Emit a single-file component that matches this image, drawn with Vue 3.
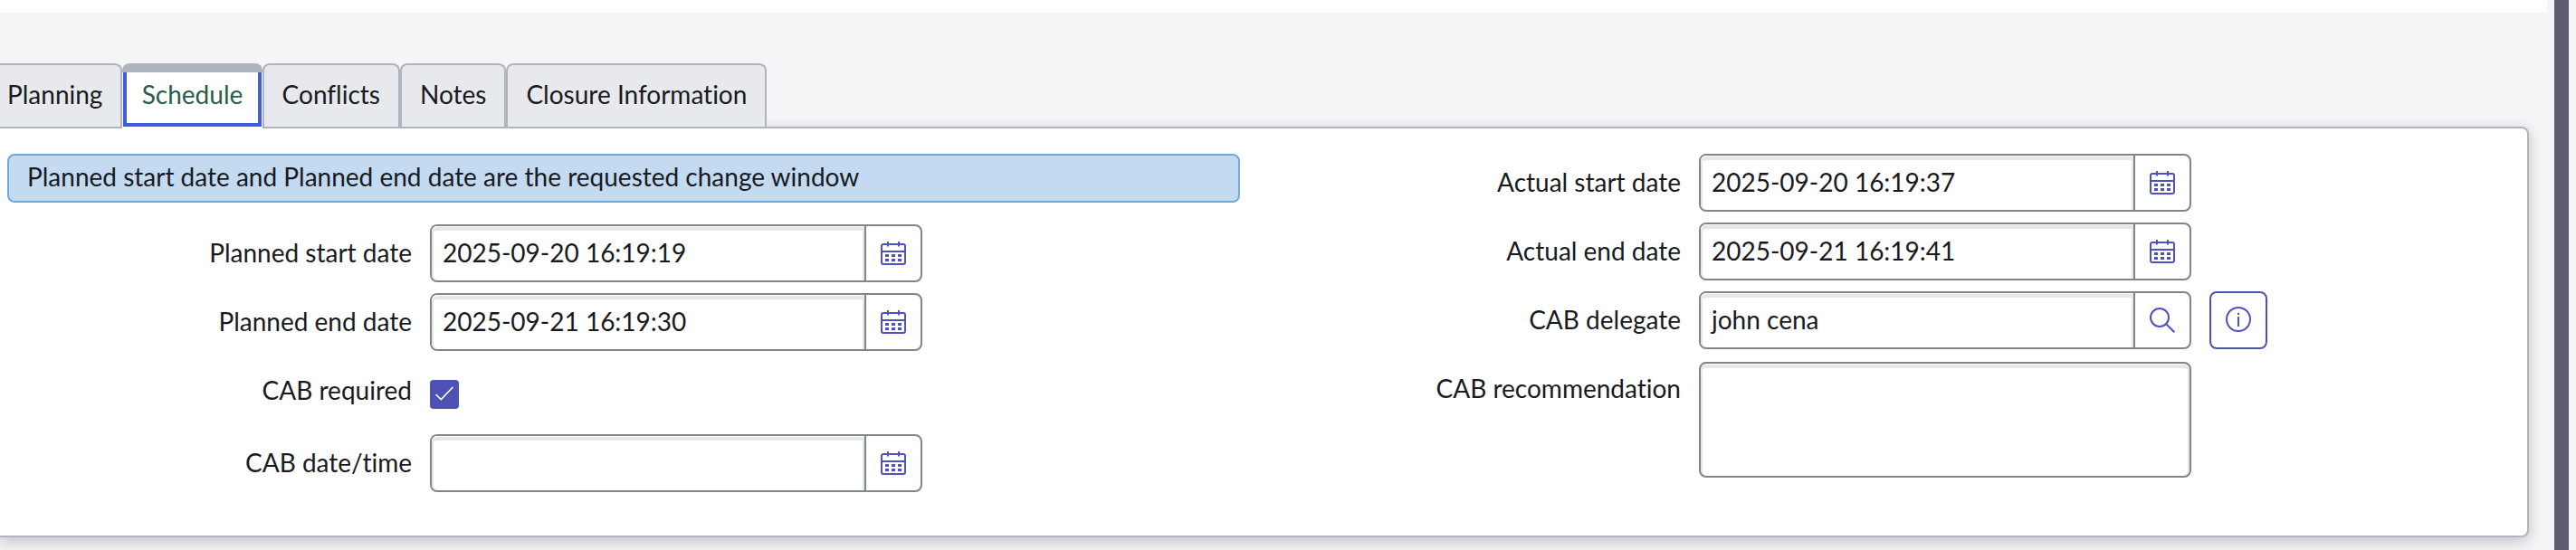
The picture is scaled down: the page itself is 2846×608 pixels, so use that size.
<script setup>
import { h } from 'vue'

const tabs = ['Planning', 'Schedule', 'Conflicts', 'Notes', 'Closure Information']
const active = 'Schedule'

const CalendarIcon = () =>
  h('svg', { width: 28, height: 28, viewBox: '0 0 28 28', fill: 'none', stroke: '#4f52bd', 'stroke-width': 2 }, [
    h('rect', { x: 1, y: 4, width: 26, height: 22, rx: 2 }),
    h('path', { d: 'M1 12H27M8 1V6.5M20 1V6.5' }),
    h('path', { d: 'M5 16.5H9M12 16.5H16M19 16.5H23M5 21.5H9M12 21.5H16M19 21.5H23', 'stroke-width': 3 }),
  ])
const SearchIcon = () =>
  h('svg', { width: 28, height: 28, viewBox: '0 0 28 28', fill: 'none', stroke: '#4f52bd', 'stroke-width': 2 }, [
    h('circle', { cx: 11, cy: 11, r: 10 }),
    h('path', { d: 'M18 18L27.3 27.3' }),
  ])

const left = [
  { label: 'Planned start date', value: '2025-09-20 16:19:19', icon: CalendarIcon },
  { label: 'Planned end date', value: '2025-09-21 16:19:30', icon: CalendarIcon },
  { label: 'CAB required', kind: 'check' },
  { label: 'CAB date/time', value: '', icon: CalendarIcon },
]
const right = [
  { label: 'Actual start date', value: '2025-09-20 16:19:37', icon: CalendarIcon },
  { label: 'Actual end date', value: '2025-09-21 16:19:41', icon: CalendarIcon },
  { label: 'CAB delegate', value: 'john cena', icon: SearchIcon, info: true },
  { label: 'CAB recommendation', kind: 'area' },
]
const columns = [
  { name: 'left', rows: left, banner: 'Planned start date and Planned end date are the requested change window' },
  { name: 'right', rows: right },
]
</script>

<template>
  <div class="page">
    <div class="main">
      <div class="top-strip"></div>
      <nav class="tabs">
        <div v-for="t in tabs" :key="t" class="tab" :class="{ active: t === active }">
          <span class="tab-text">{{ t }}</span>
        </div>
      </nav>
      <section class="panel">
        <div v-for="c in columns" :key="c.name" class="column" :class="c.name">
          <div v-if="c.banner" class="banner">{{ c.banner }}</div>
          <div v-for="r in c.rows" :key="r.label" class="row" :class="r.kind">
            <label class="label">{{ r.label }}</label>
            <span v-if="r.kind === 'check'" class="checkbox">
              <svg width="22" height="18" viewBox="0 0 22 18" fill="none" stroke="#fff" stroke-width="1.6">
                <path d="M1.5 10L7.3 15.5L20.5 1.8" />
              </svg>
            </span>
            <div v-else-if="r.kind === 'area'" class="textarea"></div>
            <template v-else>
              <div class="group">
                <div class="value">{{ r.value }}</div>
                <div class="addon"><component :is="r.icon" /></div>
              </div>
              <div v-if="r.info" class="info">
                <svg width="28" height="28" viewBox="0 0 28 28" fill="none" stroke="#4f52bd" stroke-width="2">
                  <circle cx="14" cy="14" r="13" />
                  <path d="M14 6.7V9M14 11V22" />
                </svg>
              </div>
            </template>
          </div>
        </div>
      </section>
    </div>
    <div class="gutter"></div>
  </div>
</template>

<style>
body {
  margin: 0;
}
</style>

<style scoped>
.page {
  display: flex;
  width: 2846px;
  height: 608px;
  overflow: hidden;
  background: #f5f5f8;
  font-family: Lato, "Open Sans", sans-serif;
  font-size: 28px;
  font-variant-ligatures: none;
  line-height: 40px;
  color: #181a23;
}
.page * {
  box-sizing: border-box;
}
.main {
  width: 2822px;
  height: 608px;
}
.gutter {
  width: 16px;
  background: #5d5c6c;
}
.top-strip {
  width: 2814px;
  height: 14px;
  background: #fff;
}
.tabs {
  display: flex;
  height: 70px;
  margin-top: 56px;
  margin-left: -14px;
}
.tab {
  height: 70px;
  padding: 12px 20px 0;
  border: 2px solid #b0b4be;
  border-bottom: 0;
  border-radius: 8px 8px 0 0;
  background: #e8e9ed;
  white-space: nowrap;
}
.tab.active {
  position: relative;
  height: 72px;
  padding: 4px 21.3px 0;
  border: 0;
  border-top: 10px solid #b0b4be;
  background: #fff;
  color: #285e49;
}
.tab.active::after {
  content: "";
  position: absolute;
  inset: 0 1px 2px;
  border: 4px solid #415ce0;
  border-top: 0;
}
.panel {
  display: flex;
  width: 2796px;
  height: 454px;
  margin-left: -2px;
  padding-top: 28px;
  border: 2px solid #b0b4be;
  border-radius: 0 8px 8px 0;
  background: #fff;
  box-shadow: 0 4px 16px rgba(0, 0, 0, 0.22);
}
.column {
  display: flex;
  flex-direction: column;
  gap: 12px;
}
.column.left {
  width: 1402px;
}
.banner {
  width: 1362px;
  height: 54px;
  margin: 0 0 12px 8px;
  padding: 3px 20px;
  border: 2px solid #6ea8dc;
  border-radius: 8px;
  background: #c3daf1;
}
.row {
  display: flex;
  height: 64px;
}
.label {
  width: 455px;
  margin-right: 20px;
  padding-top: 11px;
  text-align: right;
  white-space: nowrap;
}
.row.check {
  height: 68px;
}
.checkbox {
  display: flex;
  align-items: center;
  justify-content: center;
  width: 32px;
  height: 32px;
  margin-top: 20px;
  padding-bottom: 2px;
  border-radius: 4px;
  background: #4f52b5;
}
.group {
  display: flex;
  width: 544px;
  border: 2px solid #80848f;
  border-radius: 8px;
}
.value,
.textarea {
  box-shadow: inset 0 1px #fff, inset 0 5px #e6e8e8, inset 2px 0 #e6e8e8, inset -2px 0 #e6e8e8;
}
.value {
  width: 478px;
  padding: 9px 12px;
  border-radius: 6px 0 0 6px;
}
.addon {
  display: flex;
  flex: 1;
  align-items: center;
  justify-content: center;
  border-left: 2px solid #80848f;
}
.textarea {
  width: 544px;
  height: 128px;
  margin-top: 2px;
  border: 2px solid #80848f;
  border-radius: 8px;
}
.info {
  display: flex;
  align-items: center;
  justify-content: center;
  width: 64px;
  height: 64px;
  margin-left: 20px;
  padding-bottom: 2px;
  border: 2px solid #4f52b5;
  border-radius: 8px;
}
</style>
